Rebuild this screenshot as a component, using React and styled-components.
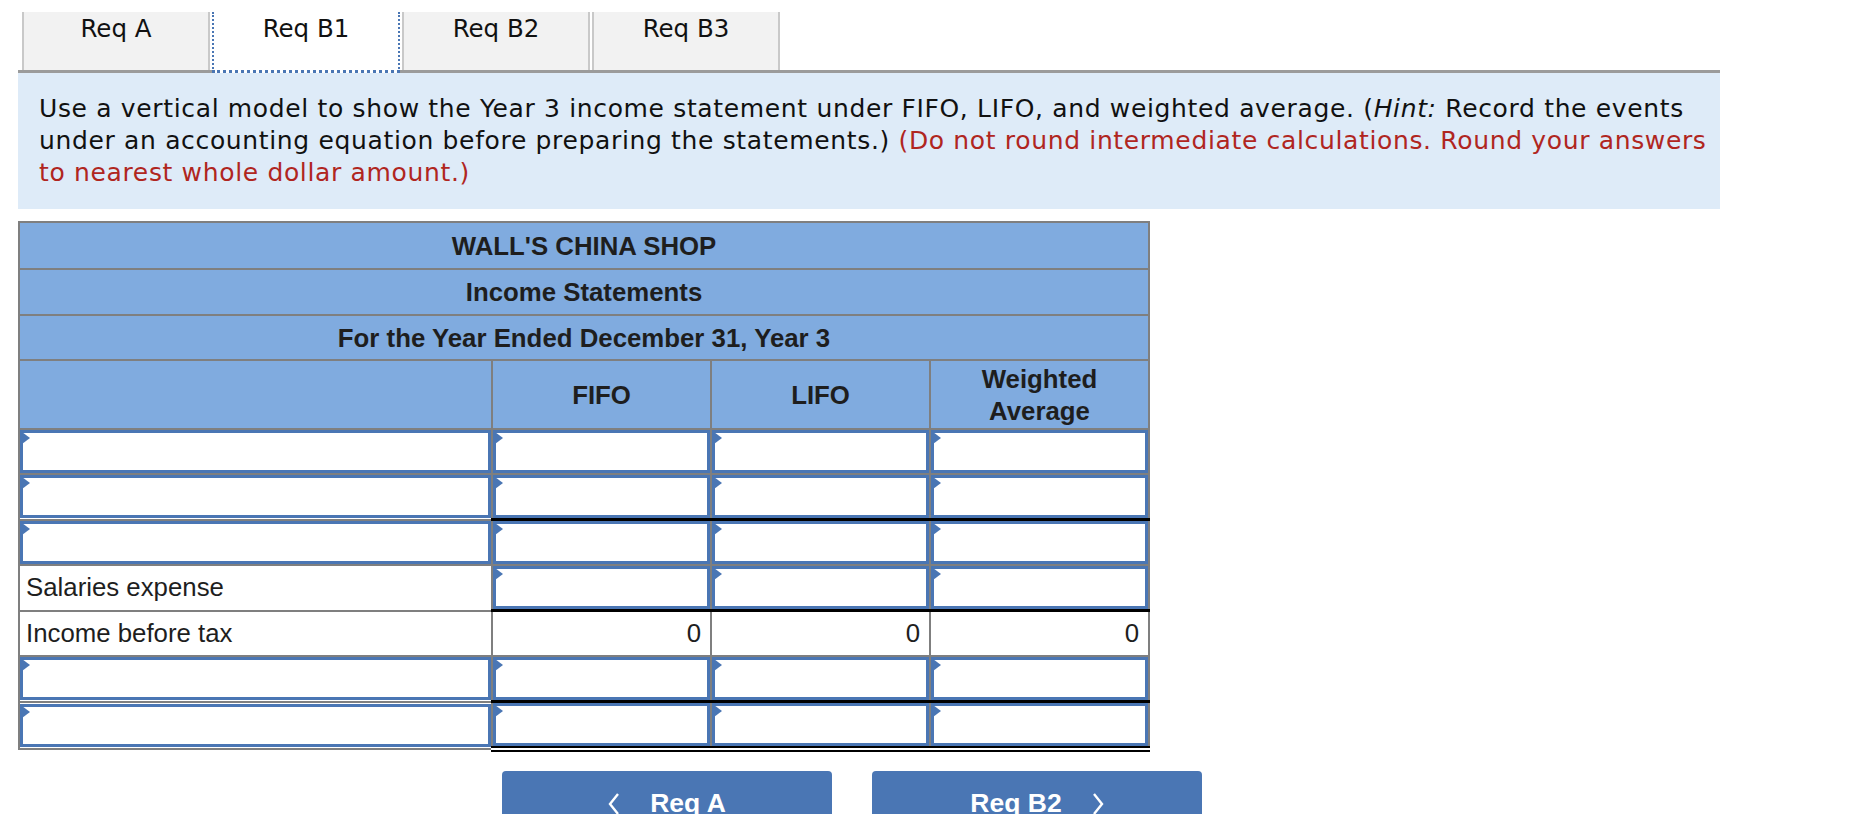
import styled, { createGlobalStyle } from "styled-components";

const GlobalStyle = createGlobalStyle`
  body {
    margin: 0;
    background: #ffffff;
    font-family: "Liberation Sans", Arial, sans-serif;
  }
`;

const Page = styled.div`
  padding: 12px 0 0 18px;
  width: 1702px;
`;

const TabBar = styled.div`
  display: flex;
  gap: 2px;
  padding-left: 4px;
  height: 58px;
  border-bottom: 3px solid #9b9b9b;
`;

const Tab = styled.div`
  width: 188px;
  box-sizing: border-box;
  height: ${(p) => (p.$active ? "61px" : "58px")};
  background: ${(p) => (p.$active ? "#ffffff" : "#f2f2f2")};
  border-left: 2px ${(p) => (p.$active ? "dotted #4a76b4" : "solid #c9c9c9")};
  border-right: 2px ${(p) => (p.$active ? "dotted #4a76b4" : "solid #c9c9c9")};
  border-bottom: ${(p) => (p.$active ? "3px dotted #4a76b4" : "none")};
  font-family: "DejaVu Sans", Verdana, sans-serif;
  font-size: 24.5px;
  color: #111111;
  text-align: center;
  padding-top: 2px;
  position: relative;
  z-index: 1;
`;

const Instructions = styled.div`
  background: #deebf8;
  padding: 20px 0 20px 21px;
  font-family: "DejaVu Sans", Verdana, sans-serif;
  font-size: 25px;
  letter-spacing: 0.65px;
  line-height: 32px;
  color: #111111;
  white-space: nowrap;
`;

const Red = styled.span`
  color: #b0261f;
`;

const Table = styled.table`
  margin-top: 12px;
  border-collapse: collapse;
  width: 1130px;
  table-layout: fixed;
  font-family: "Liberation Sans", Arial, sans-serif;
  font-size: 25.8px;
  color: #1e1e1e;
`;

const HeadCell = styled.td`
  background: #80abdf;
  border: 2px solid #7f7f7f;
  height: ${(p) => p.$h || 44}px;
  padding: 0;
  text-align: center;
  font-weight: bold;
  line-height: 32px;
`;

const Cell = styled.td`
  border: 2px solid #7f7f7f;
  border-top: ${(p) => (p.$rule ? "3px solid #000000" : "2px solid #7f7f7f")};
  border-bottom: ${(p) => (p.$double ? "6px double #000000" : "2px solid #7f7f7f")};
  height: 43px;
  padding: 0 ${(p) => (p.$num ? "9px" : "6px")};
  background: #ffffff;
  text-align: ${(p) => (p.$num ? "right" : "left")};
  vertical-align: middle;
`;

const InputCell = styled(Cell)`
  padding: 0;
`;

const InputBox = styled.div`
  position: relative;
  box-sizing: border-box;
  height: 43px;
  border: 3px solid #4a76b4;
  background: #ffffff;
  &::before {
    content: "";
    position: absolute;
    left: -1px;
    top: -1px;
    border-left: 8px solid #4a76b4;
    border-top: 6px solid transparent;
    border-bottom: 6px solid transparent;
  }
`;

const Buttons = styled.div`
  display: flex;
  gap: 40px;
  margin: 19px 0 0 484px;
`;

const NavButton = styled.button`
  width: 330px;
  height: 64px;
  border: none;
  border-radius: 4px 4px 0 0;
  background: #4a76b4;
  color: #ffffff;
  font-family: "Liberation Sans", Arial, sans-serif;
  font-weight: bold;
  font-size: 26.5px;
  display: flex;
  align-items: flex-start;
  justify-content: center;
  gap: 30px;
  padding: 17px 0 0 0;
  cursor: pointer;
`;

const Chevron = ({ dir }) => (
  <svg width="12" height="24" viewBox="0 0 12 24" style={{ marginTop: 4 }}>
    <polyline
      points={dir === "left" ? "10,2 2,12 10,22" : "2,2 10,12 2,22"}
      fill="none"
      stroke="#ffffff"
      strokeWidth="2.4"
    />
  </svg>
);

const rows = [
  { input: true },
  { input: true },
  { input: true, rule: true },
  { label: "Salaries expense" },
  { label: "Income before tax", total: true, rule: true },
  { input: true },
  { input: true, rule: true, double: true },
];

const tabs = ["Req A", "Req B1", "Req B2", "Req B3"];

export default function App() {
  return (
    <Page>
      <GlobalStyle />
      <TabBar>
        {tabs.map((t) => (
          <Tab key={t} $active={t === "Req B1"}>
            {t}
          </Tab>
        ))}
      </TabBar>
      <Instructions>
        Use a vertical model to show the Year 3 income statement under FIFO,
        LIFO, and weighted average. (<i>Hint:</i> Record the events
        <br />
        under an accounting equation before preparing the statements.){" "}
        <Red>
          (Do not round intermediate calculations. Round your answers
          <br />
          to nearest whole dollar amount.)
        </Red>
      </Instructions>
      <Table>
        <colgroup>
          <col style={{ width: 473 }} />
          <col style={{ width: 219 }} />
          <col style={{ width: 219 }} />
          <col style={{ width: 219 }} />
        </colgroup>
        <tbody>
          <tr>
            <HeadCell colSpan={4} $h={45}>WALL'S CHINA SHOP</HeadCell>
          </tr>
          <tr>
            <HeadCell colSpan={4} $h={44}>Income Statements</HeadCell>
          </tr>
          <tr>
            <HeadCell colSpan={4} $h={43}>For the Year Ended December 31, Year 3</HeadCell>
          </tr>
          <tr>
            <HeadCell $h={67} />
            <HeadCell $h={67}>FIFO</HeadCell>
            <HeadCell $h={67}>LIFO</HeadCell>
            <HeadCell $h={67}>
              Weighted
              <br />
              Average
            </HeadCell>
          </tr>
          {rows.map((r, i) => (
            <tr key={i}>
              {r.input ? (
                <InputCell>
                  <InputBox />
                </InputCell>
              ) : (
                <Cell>{r.label}</Cell>
              )}
              {[0, 1, 2].map((c) =>
                r.total ? (
                  <Cell key={c} $num $rule={r.rule}>
                    0
                  </Cell>
                ) : (
                  <InputCell key={c} $rule={r.rule} $double={r.double}>
                    <InputBox />
                  </InputCell>
                )
              )}
            </tr>
          ))}
        </tbody>
      </Table>
      <Buttons>
        <NavButton>
          <Chevron dir="left" />
          Req A
        </NavButton>
        <NavButton>
          Req B2
          <Chevron dir="right" />
        </NavButton>
      </Buttons>
    </Page>
  );
}
